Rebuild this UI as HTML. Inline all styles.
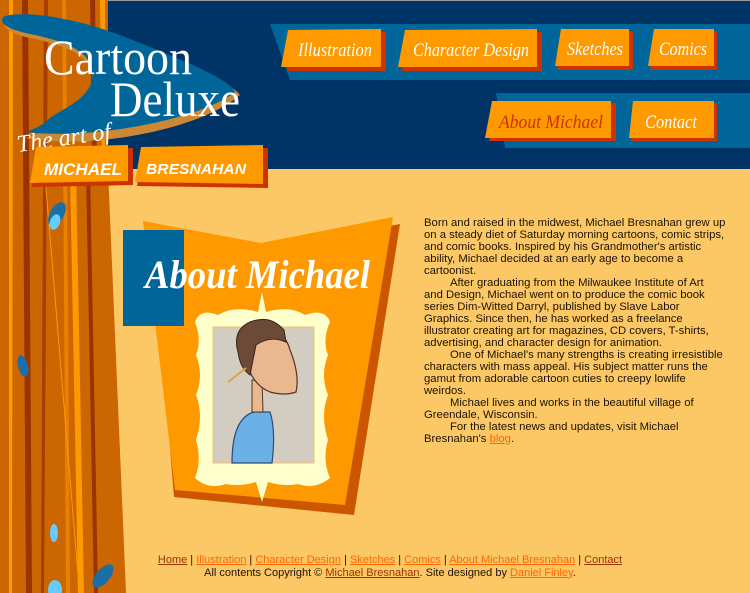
<!DOCTYPE html>
<html><head><meta charset="utf-8"><style>
*{margin:0;padding:0}
body{width:750px;height:593px;overflow:hidden;background:#fcc866;position:relative;font-family:"Liberation Sans",sans-serif}
svg{position:absolute;left:0;top:0}
.txt{position:absolute;left:424px;top:217px;font-size:11.3px;line-height:12px;color:#1e1204;white-space:nowrap}
.txt .i{padding-left:26px}
a{color:#ff6600;text-decoration:underline}
.ft{position:absolute;left:0;width:750px;top:554px;text-align:center;font-size:11px;line-height:12.5px;color:#1e1204;padding-left:30px;box-sizing:border-box}
.ft a.d{color:#993300}
</style></head><body>
<svg width="750" height="593" viewBox="0 0 750 593">
<rect x="0" y="0" width="750" height="169" fill="#003366"/>
<rect x="0" y="0" width="750" height="1" fill="#999"/>
<!-- curtain -->
<polygon points="0,0 108,0 108,170 126,593 0,593" fill="#cc6600"/>
<polygon points="9,0 13,0 12,593 9,593" fill="#ff9900"/>
<polygon points="22,0 28,0 32,593 26,593" fill="#993300"/>
<polygon points="44,0 48,0 44,593 41,593" fill="#a83d00"/>
<polygon points="62,0 66,0 70,593 66,593" fill="#e88000"/>
<polygon points="70,170 76,170 84,593 78,593" fill="#ff9900"/>
<polygon points="86,170 90,170 98,593 94,593" fill="#993300"/>
<polygon points="44,170 45,170 80,593 79,593" fill="#ff9900"/>
<polygon points="90,0 95,0 97,170 92,170" fill="#993300"/>
<polygon points="100,0 105,0 105,170 102,170" fill="#ff9900"/>
<ellipse cx="57" cy="214" rx="7" ry="13" transform="rotate(30 57 214)" fill="#1c6ea4"/>
<ellipse cx="55" cy="222" rx="5" ry="8" transform="rotate(20 55 222)" fill="#66ccff"/>
<ellipse cx="23" cy="366" rx="5" ry="11" transform="rotate(-15 23 366)" fill="#1c6ea4"/>
<ellipse cx="54" cy="533" rx="4" ry="9" fill="#66ccff"/>
<ellipse cx="55" cy="590" rx="7" ry="10" fill="#66ccff"/>
<ellipse cx="103" cy="576" rx="7" ry="14" transform="rotate(40 103 576)" fill="#1c6ea4"/>
<!-- logo boomerang -->
<path d="M26,138 C90,150 200,130 240,95 C230,80 170,60 120,40 C80,25 30,12 8,18 C0,22 2,32 30,38 C80,48 95,62 92,85 C88,105 60,115 50,125 C40,135 30,136 26,138Z" fill="#cc8833"/>
<path d="M26,132 C90,140 200,120 235,92 C230,78 170,55 120,35 C80,20 30,10 5,16 C-2,20 2,28 30,34 C80,44 95,58 92,80 C88,100 60,110 50,118 C40,128 30,130 26,132Z" fill="#006699"/>
<text x="44" y="74" font-family="Liberation Serif,serif" font-size="50" fill="#fff" textLength="148" lengthAdjust="spacingAndGlyphs">Cartoon</text>
<text x="110" y="116" font-family="Liberation Serif,serif" font-size="50" fill="#fff" textLength="130" lengthAdjust="spacingAndGlyphs">Deluxe</text>
<text x="18" y="152" font-family="Liberation Serif,serif" font-style="italic" font-size="24" fill="#fff" transform="rotate(-8 18 152)">The art of</text>
<polygon points="38,150 133,148 133,185 32,187" fill="#cc3300"/>
<polygon points="36,147 128,145 128,181 30,183" fill="#ff9900"/>
<text x="44" y="175" font-family="Liberation Sans,sans-serif" font-weight="bold" font-style="italic" font-size="17" fill="#fff" textLength="78" lengthAdjust="spacingAndGlyphs">MICHAEL</text>
<polygon points="143,150 268,148 268,188 137,186" fill="#cc3300"/>
<polygon points="141,147 263,145 263,184 135,182" fill="#ff9900"/>
<text x="146" y="174" font-family="Liberation Sans,sans-serif" font-weight="bold" font-style="italic" font-size="15" fill="#fff" textLength="100" lengthAdjust="spacingAndGlyphs">BRESNAHAN</text>
<!-- nav bands -->
<polygon points="270,24 750,24 750,80 290,80" fill="#006699"/>
<polygon points="496,93 750,93 750,148 505,148" fill="#006699"/>
<g font-family="Liberation Serif,serif" font-style="italic" font-size="19" fill="#fff">
<polygon points="291,33 386,32 386,71 287,71" fill="#cc3300"/>
<polygon points="288,30 381,29 381,67 281,67" fill="#ff9900"/>
<text x="298" y="56" textLength="74" lengthAdjust="spacingAndGlyphs">Illustration</text>
<polygon points="407,33 542,32 542,71 402,71" fill="#cc3300"/>
<polygon points="405,30 537,29 537,67 398,67" fill="#ff9900"/>
<text x="413" y="56" textLength="116" lengthAdjust="spacingAndGlyphs">Character Design</text>
<polygon points="563,32 633,31 633,70 557,70" fill="#cc3300"/>
<polygon points="561,29 629,29 629,66 555,66" fill="#ff9900"/>
<text x="567" y="55" textLength="56" lengthAdjust="spacingAndGlyphs">Sketches</text>
<polygon points="656,32 717,31 717,70 650,70" fill="#cc3300"/>
<polygon points="654,29 714,29 714,66 648,66" fill="#ff9900"/>
<text x="659" y="55" textLength="48" lengthAdjust="spacingAndGlyphs">Comics</text>
<polygon points="493,104 616,103 616,141 489,141" fill="#cc3300"/>
<polygon points="492,101 611,101 611,138 485,138" fill="#ff9900"/>
<text x="499" y="128" textLength="104" lengthAdjust="spacingAndGlyphs" fill="#cc3300">About Michael</text>
<polygon points="635,104 717,103 717,141 631,141" fill="#cc3300"/>
<polygon points="633,101 714,101 714,138 629,138" fill="#ff9900"/>
<text x="645" y="128" textLength="52" lengthAdjust="spacingAndGlyphs">Contact</text>
</g>
<!-- sign -->
<polygon points="152,228 262,250 400,224 354,515 174,497" fill="#cc5500"/>
<polygon points="143,221 261,243 393,217 345,505 175,490" fill="#ff9900"/>
<rect x="123" y="230" width="61" height="96" fill="#006699"/>
<text x="145" y="288" font-family="Liberation Serif,serif" font-style="italic" font-weight="bold" font-size="40" fill="#fff" textLength="225" lengthAdjust="spacingAndGlyphs">About Michael</text>
<!-- frame -->
<path d="M262,292 L266,312 Q290,305 305,315 Q325,308 330,322 Q322,340 328,355 Q320,375 328,395 Q320,415 328,440 Q322,460 330,478 Q315,490 298,484 Q285,487 268,482 L262,502 L256,482 Q240,487 226,484 Q208,490 195,478 Q202,460 196,440 Q204,415 196,395 Q204,375 196,355 Q202,340 195,322 Q200,308 218,315 Q234,305 258,312Z" fill="#ffffcc"/>
<rect x="213" y="327" width="101" height="136" fill="#d2cdc0" stroke="#f6c070" stroke-width="1"/>
<path d="M232,463 Q232,418 254,412 L270,412 Q276,430 272,463Z" fill="#6cb0e8" stroke="#2c4a7a" stroke-width="1.2"/>
<path d="M252,412 L252,380 L262,380 L263,412Z" fill="#eab88f" stroke="#553322" stroke-width="1"/>
<path d="M246,360 Q240,330 262,326 Q285,330 290,350 Q300,375 296,392 Q285,396 270,392 Q252,385 246,360Z" fill="#eab88f" stroke="#553322" stroke-width="1.2"/>
<path d="M238,352 Q232,330 250,322 Q270,314 284,330 L286,342 Q270,335 256,345 L250,375 Q240,368 238,352Z" fill="#6b4a38" stroke="#3a2518" stroke-width="1"/>
<line x1="228" y1="382" x2="246" y2="368" stroke="#e2a040" stroke-width="2"/>
</svg>
<div class="txt">Born and raised in the midwest, Michael Bresnahan grew up<br>on a steady diet of Saturday morning cartoons, comic strips,<br>and comic books. Inspired by his Grandmother's artistic<br>ability, Michael decided at an early age to become a<br>cartoonist.<br><span class="i">After graduating from the Milwaukee Institute of Art</span><br>and Design, Michael went on to produce the comic book<br>series Dim-Witted Darryl, published by Slave Labor<br>Graphics. Since then, he has worked as a freelance<br>illustrator creating art for magazines, CD covers, T-shirts,<br>advertising, and character design for animation.<br><span class="i">One of Michael's many strengths is creating irresistible</span><br>characters with mass appeal. His subject matter runs the<br>gamut from adorable cartoon cuties to creepy lowlife<br>weirdos.<br><span class="i">Michael lives and works in the beautiful village of</span><br>Greendale, Wisconsin.<br><span class="i">For the latest news and updates, visit Michael</span><br>Bresnahan's <a>blog</a>.</div>
<div class="ft"><a class="d">Home</a> | <a>Illustration</a> | <a>Character Design</a> | <a>Sketches</a> | <a>Comics</a> | <a>About Michael Bresnahan</a> | <a class="d">Contact</a><br>All contents Copyright © <a class="d">Michael Bresnahan</a>. Site designed by <a>Daniel Finley</a>.</div>
</body></html>
